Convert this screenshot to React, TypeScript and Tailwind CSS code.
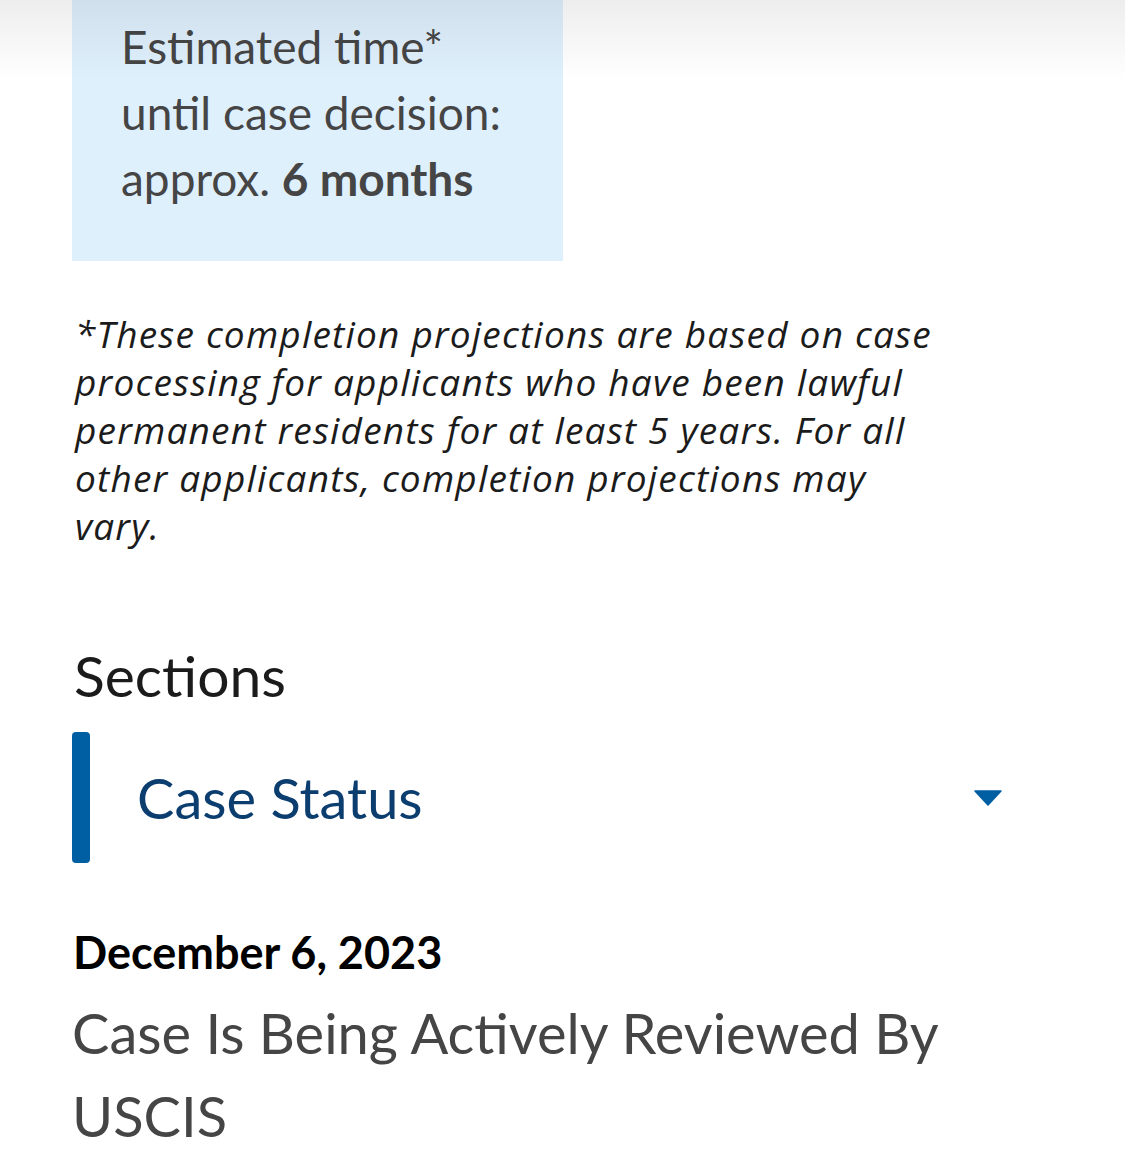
const App = () => {
  return (
    <div className="relative min-h-screen overflow-hidden bg-white font-['Lato',sans-serif]">
      <div className="px-[72px]">
        <div className="w-[491px] bg-[#dff0fd] pb-[49px] pl-[49px] pt-[14px] text-[46px] leading-[66px] text-[#454545]">
          <p>Estimated time*</p>
          <p>until case decision:</p>
          <p>
            approx. <span className="font-bold">6 months</span>
          </p>
        </div>

        {/* line breaks kept as in the app so the wrap matches */}
        <p className="mt-[49px] pl-[3px] font-['Open_Sans',sans-serif] text-[37px] italic leading-[48px] tracking-[1.2px] text-[#1b1b1b]">
          *These completion projections are based on case
          <br />
          processing for applicants who have been lawful
          <br />
          permanent residents for at least 5 years. For all
          <br />
          other applicants, completion projections may
          <br />
          vary.
        </p>

        <h2 className="mt-[93px] pl-[2px] text-[57px] leading-[64px] text-[#1b1b1b]">Sections</h2>

        <div className="mt-[25px] flex h-[131px] items-center">
          <div className="h-full w-[18px] rounded-[4px] bg-[#005ea2]" />
          <span className="ml-[47px] flex-1 text-[56px] leading-none text-[#0b3d6f]">Case Status</span>
          <svg width="28" height="16" viewBox="0 0 28 16" className="mr-[51px]">
            <path d="M1 1 H27 L14 15 Z" fill="#005ea2" stroke="#005ea2" strokeWidth="1.5" strokeLinejoin="round" />
          </svg>
        </div>

        <p className="mt-[63px] pl-[1px] text-[45px] font-bold leading-[52px] text-black">December 6, 2023</p>
        <p className="mt-[13px] text-[56px] leading-[83px] text-[#454545]">Case Is Being Actively Reviewed By USCIS</p>
      </div>

      <div className="pointer-events-none absolute inset-x-0 top-0 h-[80px] bg-gradient-to-b from-black/[0.07] to-transparent" />
    </div>
  )
}

export default App
